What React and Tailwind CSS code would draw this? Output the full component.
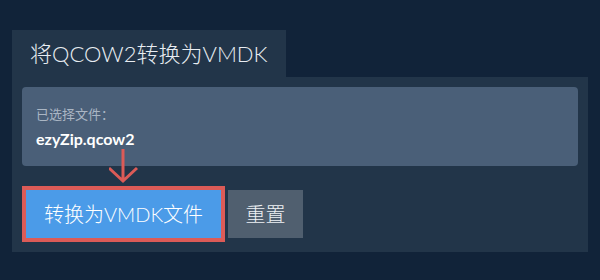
import React from 'react';

const font = { fontFamily: 'Lato, "Noto Sans CJK SC", sans-serif' };

const App = () => {
  return (
    <div className="w-[600px] h-[280px] bg-[#112339] pt-[30px] px-[12px]" style={font}>
      {/* Tab header */}
      <div className="w-[274px] h-[47px] bg-[#223549] flex items-center pl-[18px]">
        <span className="text-[22px] font-light text-[#e8edf2] leading-none">将QCOW2转换为VMDK</span>
      </div>

      {/* Panel */}
      <div className="relative bg-[#223549] p-[10px] pb-[14px]">
        <div className="h-[79px] rounded-[4px] bg-[#4a5f78] px-[14px] pt-[18px]">
          <div className="text-[13px] text-[#aab6c4] leading-[18px]">已选择文件：</div>
          <div className="mt-[6px] text-[16px] font-bold text-white leading-[20px]">ezyZip.qcow2</div>
        </div>

        <div className="mt-[24px] flex gap-[7px] pl-[4px]">
          <button className="w-[195px] h-[48px] bg-[#4b9be8] text-white text-[20px] font-light ring-4 ring-[#dc5b57]">
            转换为VMDK文件
          </button>
          <button className="w-[75px] h-[48px] bg-[#505f6f] text-[#eef1f4] text-[20px] font-light">
            重置
          </button>
        </div>

        {/* Annotation arrow */}
        <svg className="absolute left-[97px] top-[70px]" width="30" height="40" viewBox="0 0 30 40">
          <path d="M14 2 V34 M0 21 L14 34 L28 21" fill="none" stroke="#dc5b57" strokeWidth="3" />
        </svg>
      </div>
    </div>
  );
};

export default App;
